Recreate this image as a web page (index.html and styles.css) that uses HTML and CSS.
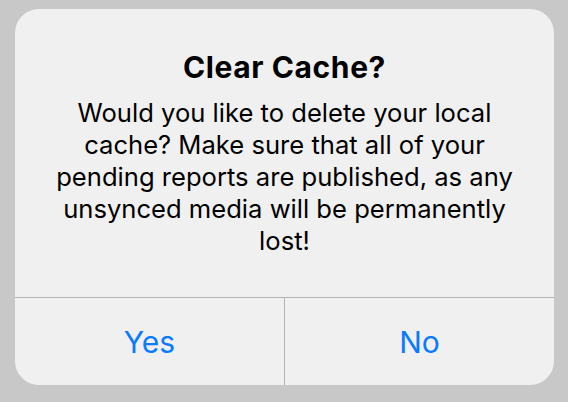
FILE: index.html
```html
<!DOCTYPE html>
<html lang="en">
<head>
  <meta charset="UTF-8" />
  <meta name="viewport" content="width=device-width, initial-scale=1.0" />
  <title>Clear Cache?</title>
  <link rel="stylesheet" href="styles.css">
</head>
<body>
  <div class="alert">
    <div class="alert-content">
      <h2 class="alert-title">Clear Cache?</h2>
      <p class="alert-message">Would you like to delete your local cache? Make sure that all of your pending reports are published, as any unsynced media will be permanently lost!</p>
    </div>
    <div class="alert-actions">
      <button type="button">Yes</button>
      <button type="button">No</button>
    </div>
  </div>
</body>
</html>
```

FILE: styles.css
```css
* {
  box-sizing: border-box;
  padding: 0;
  margin: 0;
  font-family: 'Inter', 'Liberation Sans', sans-serif;
}

body {
  background: #c8c8c8;
  min-height: 100vh;
  padding: 9px 0 0 15px;
}

.alert {
  width: 539px;
  height: 376px;
  background: #f0f0f0;
  border-radius: 24px;
  display: flex;
  flex-direction: column;
  overflow: hidden;
}

.alert-content {
  padding: 41px 32px 0;
  height: 288px;
  text-align: center;
  color: #000;
}

.alert-title {
  font-size: 30px;
  line-height: 34px;
  font-weight: 700;
  letter-spacing: 0.6px;
  margin-bottom: 13px;
}

.alert-message {
  font-size: 25.6px;
  line-height: 32px;
  font-weight: 400;
}

.alert-actions {
  flex: 1;
  display: flex;
  border-top: 1px solid #b4b4b4;
}

.alert-actions button {
  flex: 1;
  background: none;
  border: none;
  color: #0a7aff;
  font-size: 30px;
  font-weight: 400;
  cursor: pointer;
}

.alert-actions button + button {
  border-left: 1px solid #b4b4b4;
}
```
